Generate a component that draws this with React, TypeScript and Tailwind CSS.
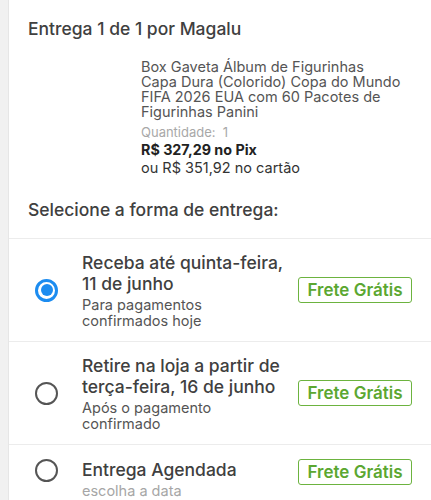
import React from "react";

const font = { fontFamily: 'Inter, "Open Sans", Arial, sans-serif' };

function Radio({ checked }: { checked?: boolean }) {
  if (checked) {
    return (
      <div className="w-[23px] h-[23px] rounded-full border-[3px] border-[#1c8cf0] flex items-center justify-center shrink-0">
        <div className="w-[12px] h-[12px] rounded-full bg-[#1c8cf0]" />
      </div>
    );
  }
  return <div className="w-[23px] h-[23px] rounded-full border-[2.5px] border-[#555555] shrink-0" />;
}

function Badge() {
  return (
    <div className="shrink-0 border-[1.5px] border-[#6cb33f] rounded-[3px] w-[114px] h-[26px] flex items-center justify-center text-[#5ba731] text-[17px] font-semibold leading-none">
      Frete Grátis
    </div>
  );
}

function Option({
  checked,
  title,
  sub,
  subLight,
  className,
}: {
  checked?: boolean;
  title: React.ReactNode;
  sub: React.ReactNode;
  subLight?: boolean;
  className?: string;
}) {
  return (
    <div className={"flex shrink-0 border-t border-[#ececec] pl-[26px] pr-[19px] " + (className ?? "")}>
      <Radio checked={checked} />
      <div className="flex-1 pl-[24px] pr-[4px]">
        <div className="text-[17.5px] leading-[21px] font-medium text-[#404040] whitespace-nowrap">{title}</div>
        <div
          className={
            "text-[14.5px] leading-[16px] mt-[3px] " + (subLight ? "text-[#a6a6a6]" : "text-[#555555]")
          }
        >
          {sub}
        </div>
      </div>
      <Badge />
    </div>
  );
}

export default function App() {
  return (
    <div className="flex w-[431px] h-[500px] overflow-hidden bg-white" style={font}>
      <div className="w-[9px] shrink-0 bg-[#f1f1f1] border-r border-[#e6e6e6]" />
      <div className="flex-1 flex flex-col">
        <div className="shrink-0 pl-[19px] pt-[17px] text-[17.5px] leading-[24px] font-medium text-[#404040]">
          Entrega 1 de 1 por Magalu
        </div>
        <div className="shrink-0 pl-[132px] pt-[18px] pr-[4px]">
          <div className="text-[14.5px] leading-[15px] text-[#555555] whitespace-nowrap">
            Box Gaveta Álbum de Figurinhas
            <br />
            Capa Dura (Colorido) Copa do Mundo
            <br />
            FIFA 2026 EUA com 60 Pacotes de
            <br />
            Figurinhas Panini
          </div>
          <div className="text-[13px] leading-[16px] mt-[5px] text-[#a8a8a8]">Quantidade:&nbsp; 1</div>
          <div className="text-[14.3px] leading-[18px] mt-[1px] font-bold text-[#222222]">R$ 327,29 no Pix</div>
          <div className="text-[14.5px] leading-[17px] text-[#333333]">ou R$ 351,92 no cartão</div>
        </div>
        <div className="shrink-0 pl-[19px] pt-[22px] pb-[16px] text-[17.5px] leading-[24px] font-medium text-[#404040]">
          Selecione a forma de entrega:
        </div>
        <Option
          checked
          className="h-[103px] items-center"
          title={
            <>
              Receba até quinta-feira,
              <br />
              11 de junho
            </>
          }
          sub={
            <>
              Para pagamentos
              <br />
              confirmados hoje
            </>
          }
        />
        <Option
          className="h-[103px] items-center"
          title={
            <>
              Retire na loja a partir de
              <br />
              terça-feira, 16 de junho
            </>
          }
          sub={
            <>
              Após o pagamento
              <br />
              confirmado
            </>
          }
        />
        <Option className="h-[70px] items-start pt-[14px]" title="Entrega Agendada" sub="escolha a data" subLight />
      </div>
    </div>
  );
}
